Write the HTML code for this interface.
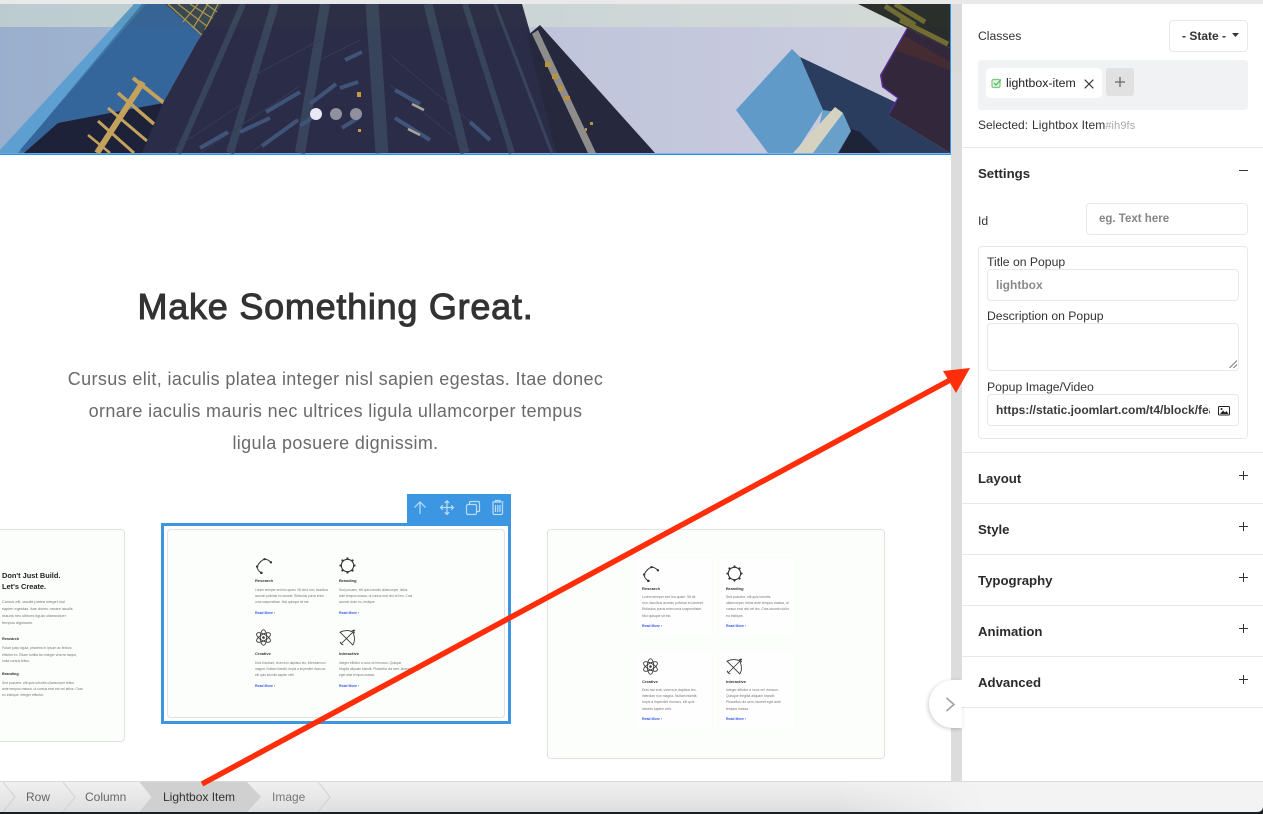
<!DOCTYPE html>
<html lang="en"><head><meta charset="utf-8"><title>Lightbox Item</title>
<style>
html,body{margin:0;padding:0;background:#fff}
body{width:1263px;height:814px;overflow:hidden;position:relative;font-family:"Liberation Sans",sans-serif;color:#222}
.a{position:absolute;box-sizing:border-box}
.t{position:absolute;white-space:nowrap;line-height:1}
.h{font-size:13.2px;font-weight:bold;color:#2b2b2b;left:978px}
.l{font-size:12.2px;color:#333}
.in{position:absolute;box-sizing:border-box;border:1px solid #e8e8e8;border-radius:4px;background:#fff}
.div{position:absolute;left:962px;width:301px;height:1px;background:#e8e8e8}
.card{position:absolute;box-sizing:border-box;background:#fcfefb;border:1px solid #e2e2e2;border-radius:4px}
.m{position:absolute;white-space:nowrap;line-height:1;font-size:3.4px;color:#777;filter:blur(.2px)}
.m.s{font-size:3.2px}
.mt{position:absolute;white-space:nowrap;line-height:1;font-size:4px;font-weight:bold;color:#333;filter:blur(.2px)}
.mr{position:absolute;white-space:nowrap;line-height:1;font-size:3.5px;font-weight:bold;color:#3358e8;filter:blur(.2px)}
.sub{position:absolute;background:#fdfefd;box-shadow:0 0 1px #f3f6f3}
.pl{position:absolute;left:1239px;width:9px;height:9px}
</style></head>
<body>
<!-- top strip -->
<div class="a" style="left:0;top:0;width:1263px;height:4px;background:#e9e9e9"></div>
<!-- hero -->
<svg class="a" style="left:0;top:4px" width="951" height="151" viewBox="0 4 951 151">
<defs><linearGradient id="sky" x1="0" x2="1" y1="0" y2="0"><stop offset="0" stop-color="#9aafcd"/><stop offset=".15" stop-color="#a0b4d0"/><stop offset=".6" stop-color="#c0c5db"/><stop offset="1" stop-color="#cdcedf"/></linearGradient></defs>
<rect x="0" y="4" width="951" height="150" fill="url(#sky)"/>
<rect x="0" y="4" width="951" height="23" fill="#eef8ea" opacity=".5"/>
<!-- light blue edge -->
<polygon points="134,4 146,4 24,153 0,153 0,150" fill="#5d9fd0"/>
<polygon points="142,4 146,4 26,153 18,153" fill="#3f77a6"/>
<!-- glass -->
<polygon points="146,4 222,4 197,42 163,103 58,125 26,153 20,150" fill="#34659b"/>
<polygon points="58,123 163,103 173,100 150,153 24,153" fill="#1d2238"/>
<!-- gold frame top -->
<polygon points="165,4 222,4 205,38" fill="#3a4148" opacity=".85"/>
<g stroke="#b89b50" stroke-width="1.2" fill="none"><path d="M168 4L203 36M178 4L212 30M190 4L218 22M206 4L220 14M198 4L183 22M208 4L193 28M218 4L205 30"/></g>
<!-- gold structure -->
<g stroke="#c4a25c" fill="none"><path d="M97 153L143 82" stroke-width="6"/><path d="M133 78L164 103" stroke-width="4"/><path d="M118 93L154 124" stroke-width="3.5"/><path d="M108 108L147 141" stroke-width="3"/><path d="M98 121L134 153" stroke-width="3"/><path d="M88 135L110 153" stroke-width="2.5"/></g>
<!-- main dark building -->
<polygon points="222,4 522,4 530,32 556,153 142,153 163,103 197,42" fill="#2b2c47"/>
<g stroke="#38445c" fill="none">
<path d="M243 4L178 153" stroke-width="6"/><path d="M275 4L230 153" stroke-width="8"/><path d="M325 4L300 153" stroke-width="10"/><path d="M372 4L382 153" stroke-width="13"/><path d="M428 4L465 153" stroke-width="9"/><path d="M465 4L512 153" stroke-width="6"/><path d="M495 4L552 153" stroke-width="3"/>
<path d="M168 153L240 105M255 75L320 40M200 153L300 86M250 153L310 112M320 60L360 40M390 55L480 130M390 85L470 150" stroke="#333c55" stroke-width="1"/>
</g>
<g stroke="#3f5478" fill="none" stroke-width="4"><path d="M270 118L240 132M300 92L266 112M200 148L228 132M336 84L310 104M262 146L298 120M320 112L300 126M395 90L420 104M395 118L430 140M345 60L362 52M340 88L358 82M342 128L358 118M470 122L490 140"/></g>
<path d="M412 104L424 110M408 129L420 135" stroke="#a8a594" stroke-width="2.5"/>
<rect x="357" y="92" width="4" height="5" fill="#c89a3d"/>
<rect x="358" y="129" width="3" height="3" fill="#c89a3d"/>
<!-- second building -->
<polygon points="527,36 540,25 655,153 556,153" fill="#26283d"/>
<polygon points="532,34 538,30 596,153 588,153" fill="#8e8d8c"/>
<g fill="#b8923c"><rect x="545" y="62" width="6" height="5"/><rect x="552" y="74" width="6" height="5"/><rect x="558" y="86" width="5" height="5"/><rect x="564" y="96" width="6" height="4"/><rect x="585" y="128" width="2" height="3"/><rect x="590" y="122" width="3" height="3"/></g>
<!-- cube -->
<polygon points="792,49 736,110 768,153 795,153 823,110 800,57" fill="#5f9ac9"/>
<polygon points="800,57 897,103 888,115 950,153 813,153 823,110" fill="#2b3d5f"/>
<polygon points="840,125 851,131 839,153 881,153 860,132" fill="#1e2438"/>
<polygon points="823,110 843,113 851,131 838,153 813,153" fill="#68a0ca"/>
<polygon points="835,107 843,113 813,153 793,153" fill="#d5d2c2"/>
<!-- top right -->
<polygon points="907,28 880,75 882,87 898,98 888,115 950,153 950,48" fill="#33273b"/>
<path d="M907 29L881 75L883 87L898 98L889 114" fill="none" stroke="#5a2a9e" stroke-width="1.3"/>
<polygon points="858,4 950,4 950,48 907,28" fill="#282c2c"/>
<path d="M885 6L915 25M900 20L948 44M895 4L925 22" stroke="#8d8236" stroke-width="5" opacity=".75"/>
<polygon points="905,36 950,62 950,70 895,50" fill="#452c33"/>
<!-- band dark overlay -->
<rect x="0" y="4" width="951" height="23" fill="#5a6a3c" opacity=".07"/>
<circle cx="316" cy="114" r="6" fill="#e9e9f5"/><circle cx="336" cy="114" r="6" fill="#91909f"/><circle cx="356" cy="114" r="6" fill="#91909f"/>
<rect x="950" y="4" width="1" height="150" fill="#2a93ea"/>
<rect x="0" y="153.6" width="951" height="1.4" fill="#2a93ea"/>
</svg>

<!-- gray gutter -->
<div class="a" style="left:951px;top:4px;width:11px;height:777px;background:#dcdcdc"></div>
<div class="a" style="left:951px;top:4px;width:11px;height:68px;background:#dadada"></div>
<!-- heading -->
<div class="t" style="left:0;width:671px;text-align:center;top:289px;font-size:36px;line-height:36px;color:#333;-webkit-text-stroke:1px #333;letter-spacing:.75px">Make Something Great.</div>
<div class="t" style="left:0;width:671px;text-align:center;top:370px;font-size:18px;line-height:18px;color:#6a6a6a;letter-spacing:.36px">Cursus elit, iaculis platea integer nisl sapien egestas. Itae donec</div>
<div class="t" style="left:0;width:671px;text-align:center;top:402px;font-size:18px;line-height:18px;color:#6a6a6a;letter-spacing:.36px">ornare iaculis mauris nec ultrices ligula ullamcorper tempus</div>
<div class="t" style="left:0;width:671px;text-align:center;top:434px;font-size:18px;line-height:18px;color:#6a6a6a;letter-spacing:.36px">ligula posuere dignissim.</div>

<svg width="0" height="0" style="position:absolute">
<symbol id="i1" viewBox="0 0 16 16"><path d="M2 9C4 5 6 3 9 2C11 2 13 3 15 5M2 9C2 11 3 13 6 15" fill="none" stroke="#333" stroke-width=".9"/><circle cx="9" cy="2" r="1.1" fill="#333"/><circle cx="15" cy="5" r="1.1" fill="#333"/><circle cx="2" cy="9" r="1.1" fill="#333"/><circle cx="6" cy="15" r="1.2" fill="#333"/></symbol>
<symbol id="i2" viewBox="0 0 16 16"><circle cx="8" cy="8" r="5.8" fill="none" stroke="#333" stroke-width="1"/><g fill="#333"><circle cx="8" cy="1.3" r="1"/><circle cx="8" cy="14.7" r="1"/><circle cx="1.3" cy="8" r="1"/><circle cx="14.7" cy="8" r="1"/><circle cx="3.2" cy="3.2" r="1"/><circle cx="12.8" cy="3.2" r="1"/><circle cx="3.2" cy="12.8" r="1"/><circle cx="12.8" cy="12.8" r="1"/></g></symbol>
<symbol id="i3" viewBox="0 0 16 16"><g fill="none" stroke="#333" stroke-width=".8"><ellipse cx="8" cy="8" rx="3" ry="7.3"/><ellipse cx="8" cy="8" rx="3" ry="7.3" transform="rotate(60 8 8)"/><ellipse cx="8" cy="8" rx="3" ry="7.3" transform="rotate(120 8 8)"/></g><circle cx="8" cy="8" r="1.2" fill="#333"/></symbol>
<symbol id="i4" viewBox="0 0 16 16"><g fill="none" stroke="#333" stroke-width=".8"><path d="M1 3C5 1 10 1 13 3C15 7 15 12 13 15Z"/><path d="M2 14L14 2M2 14L1 12M2 14L4 15M14 2L15 1M12 2L14 1V3L15 4"/></g></symbol>
</svg>

<!-- left card -->
<div class="card" style="left:-12px;top:529px;width:137px;height:213px"></div>
<div class="t" style="left:2px;top:572px;font-size:7.4px;font-weight:bold;color:#222">Don't Just Build.</div>
<div class="t" style="left:2px;top:583px;font-size:7.4px;font-weight:bold;color:#222">Let's Create.</div>
<div class="m" style="left:2px;top:600px;font-size:3.9px">Cursus elit, iaculis platea integer nisl</div>
<div class="m" style="left:2px;top:607px;font-size:3.9px">sapien egestas. Itae donec ornare iaculis</div>
<div class="m" style="left:2px;top:614px;font-size:3.9px">mauris nec ultrices ligula ullamcorper</div>
<div class="m" style="left:2px;top:621px;font-size:3.9px">tempus dignissim.</div>
<div class="mt" style="left:2px;top:638px;font-size:3.8px">Research</div>
<div class="m" style="left:2px;top:647px">Fusce justo ligula, pharetra in ipsum ac finibus</div>
<div class="m" style="left:2px;top:654px">efficitur ex. Etiam tortilla leo integer viverra neque,</div>
<div class="m" style="left:2px;top:660px">nulla cursus tellus.</div>
<div class="mt" style="left:2px;top:673px;font-size:3.8px">Branding</div>
<div class="m" style="left:2px;top:682px">Sed posuere, elit quis lobortis ullamcorper tellus</div>
<div class="m" style="left:2px;top:688px">ante tempus massa, ut cursus erat est vel tellus. Cras</div>
<div class="m" style="left:2px;top:694px">eu tristique. Integer efficitur.</div>

<!-- selected card -->
<div class="a" style="left:161px;top:523px;width:350px;height:201px;border:3px solid #3d96e2;background:#fff"></div>
<div class="card" style="left:167px;top:529px;width:338px;height:189px"></div>
<div class="a" style="left:407px;top:494px;width:104px;height:32px;background:#3d96e2"></div>
<svg class="a" style="left:407px;top:494px" width="104" height="32" viewBox="0 0 104 32"><g fill="none" stroke="#bcdcf6" stroke-width="1.2"><path d="M13 20V8M7.5 13.5L13 8L18.5 13.5"/><path d="M40 7V20M34 13.5H46M37.8 9L40 6.8L42.2 9M37.8 18.2L40 20.4L42.2 18.2M35.8 11.3L33.5 13.5L35.8 15.7M44.2 11.3L46.5 13.5L44.2 15.7"/><rect x="59.5" y="10.5" width="10" height="10" rx="1.5"/><path d="M62.5 10.5V8.5Q62.5 7.5 63.5 7.5H71Q72.5 7.5 72.5 9V16.5Q72.5 17.5 71.5 17.5H69.5"/><path d="M86 9V19Q86 20.5 87.5 20.5H94Q95.5 20.5 95.5 19V9M85 8H96.5M88.5 8V6.5H93V8M88.5 11V18M90.8 11V18M93 11V18"/></g></svg>
<svg class="a" style="left:255px;top:557px" width="17" height="17"><use href="#i1"/></svg>
<svg class="a" style="left:339px;top:557px" width="17" height="17"><use href="#i2"/></svg>
<svg class="a" style="left:255px;top:629px" width="17" height="17"><use href="#i3"/></svg>
<svg class="a" style="left:339px;top:629px" width="17" height="17"><use href="#i4"/></svg>
<div class="mt" style="left:255px;top:579px">Research</div><div class="mt" style="left:339px;top:579px">Branding</div>
<div class="m s" style="left:255px;top:588.5px">Lorem semper sed leo quam. Sit strut non, faucibus</div>
<div class="m s" style="left:255px;top:594.5px">acumin pulvinar eu laoreet. Ridiculus purus enim</div>
<div class="m s" style="left:255px;top:601px">urna suspendisse. Nisi quisque sit est.</div>
<div class="mr" style="left:255px;top:611.5px">Read More ›</div>
<div class="m s" style="left:339px;top:588.5px">Sed posuere, elit quis lobortis ullamcorper, tellus</div>
<div class="m s" style="left:339px;top:594.5px">ante tempus massa, ut cursus erat nisi vel leo. Cras</div>
<div class="m s" style="left:339px;top:601px">acumin dolor eu, tristique.</div>
<div class="mr" style="left:339px;top:611.5px">Read More ›</div>
<div class="mt" style="left:255px;top:652px">Creative</div><div class="mt" style="left:339px;top:652px">Interactive</div>
<div class="m s" style="left:255px;top:661.5px">Duis tincidunt, viverra in dapibus leo, interdumnon</div>
<div class="m s" style="left:255px;top:667.5px">magna. Nullam blandit, turpis a imperdiet rhoncus,</div>
<div class="m s" style="left:255px;top:674px">elit quis lobortis sapien velit.</div>
<div class="mr" style="left:255px;top:684.5px">Read More ›</div>
<div class="m s" style="left:339px;top:661.5px">Integer efficitur a nunc vel rhoncus. Quisque</div>
<div class="m s" style="left:339px;top:667.5px">fringilla aliquam blandit. Phasellus dui sem, laoreet</div>
<div class="m s" style="left:339px;top:674px">eget ante tempus massa.</div>
<div class="mr" style="left:339px;top:684.5px">Read More ›</div>

<!-- right card -->
<div class="card" style="left:547px;top:529px;width:338px;height:230px"></div>
<div class="sub" style="left:635px;top:558px;width:77px;height:78px"></div>
<div class="sub" style="left:719px;top:558px;width:77px;height:78px"></div>
<div class="sub" style="left:635px;top:651px;width:77px;height:78px"></div>
<div class="sub" style="left:719px;top:651px;width:77px;height:78px"></div>
<svg class="a" style="left:642px;top:565px" width="17" height="17"><use href="#i1"/></svg>
<svg class="a" style="left:726px;top:565px" width="17" height="17"><use href="#i2"/></svg>
<svg class="a" style="left:642px;top:658px" width="17" height="17"><use href="#i3"/></svg>
<svg class="a" style="left:726px;top:658px" width="17" height="17"><use href="#i4"/></svg>
<div class="mt" style="left:642px;top:587px">Research</div><div class="mt" style="left:726px;top:587px">Branding</div>
<div class="m" style="left:642px;top:596px">Lorem semper sed leo quam. Sit sit</div>
<div class="m" style="left:642px;top:602px">non, faucibus acumin pulvinar eu laoreet.</div>
<div class="m" style="left:642px;top:608px">Ridiculus purus enim urna suspendisse.</div>
<div class="m" style="left:642px;top:614.5px">Nisi quisque sit est.</div>
<div class="mr" style="left:642px;top:625px">Read More ›</div>
<div class="m" style="left:726px;top:596px">Sed posuere, elit quis lobortis</div>
<div class="m" style="left:726px;top:602px">ullamcorper, tellus ante tempus massa, ut</div>
<div class="m" style="left:726px;top:608px">cursus erat nisi vel leo. Cras acumin dolor</div>
<div class="m" style="left:726px;top:614.5px">eu tristique.</div>
<div class="mr" style="left:726px;top:625px">Read More ›</div>
<div class="mt" style="left:642px;top:680px">Creative</div><div class="mt" style="left:726px;top:680px">Interactive</div>
<div class="m" style="left:642px;top:689px">Duis nisl erat, viverra in dapibus leo,</div>
<div class="m" style="left:642px;top:695px">interdum non magna. Nullam blandit,</div>
<div class="m" style="left:642px;top:701px">turpis a imperdiet rhoncus, elit quis</div>
<div class="m" style="left:642px;top:707.5px">lobortis sapien velit.</div>
<div class="mr" style="left:642px;top:718px">Read More ›</div>
<div class="m" style="left:726px;top:689px">Integer efficitur a nunc vel rhoncus.</div>
<div class="m" style="left:726px;top:695px">Quisque fringilla aliquam blandit.</div>
<div class="m" style="left:726px;top:701px">Phasellus dui sem, laoreet eget ante</div>
<div class="m" style="left:726px;top:707.5px">tempus massa.</div>
<div class="mr" style="left:726px;top:718px">Read More ›</div>

<!-- panel -->
<div class="a" style="left:962px;top:4px;width:301px;height:777px;background:#fff"></div>
<div class="t l" style="left:978px;top:29.5px">Classes</div>
<div class="in" style="left:1169px;top:20px;width:79px;height:32px"></div>
<div class="t" style="left:1182px;top:29.5px;font-size:12px;font-weight:bold;color:#333">- State -</div>
<svg class="a" style="left:1232px;top:33px" width="8" height="5"><path d="M0 0H7L3.5 4Z" fill="#333"/></svg>
<div class="a" style="left:978px;top:60px;width:270px;height:50px;background:#f1f2f4;border-radius:3px"></div>
<div class="a" style="left:986px;top:68px;width:116px;height:30px;background:#fff;border-radius:4px"></div>
<svg class="a" style="left:991px;top:78px" width="11" height="11" viewBox="0 0 11 11"><rect x="1" y="1.5" width="8" height="8" rx="1.5" fill="#dff3df" stroke="#79c97e" stroke-width="1.2"/><path d="M3 5L5 7L10 1.5" fill="none" stroke="#5cbc63" stroke-width="1.3"/></svg>
<div class="t" style="left:1006px;top:76.5px;font-size:12.3px;color:#222">lightbox-item</div>
<svg class="a" style="left:1084px;top:79px" width="10" height="10"><path d="M.7.7L9.3 9.3M9.3.7L.7 9.3" stroke="#333" stroke-width="1.1"/></svg>
<div class="a" style="left:1106px;top:68px;width:28px;height:28px;background:#e1e1e1;border-radius:3px"></div>
<svg class="a" style="left:1115px;top:77px" width="10" height="10"><path d="M5 0V10M0 5H10" stroke="#666" stroke-width="1.3"/></svg>
<div class="t" style="left:978px;top:119px;font-size:12px;color:#333">Selected:</div>
<div class="t" style="left:1032px;top:119px;font-size:12px;color:#333;letter-spacing:.1px">Lightbox Item<span style="font-size:11px;color:#aaa">#ih9fs</span></div>
<div class="div" style="top:147px"></div>
<div class="t h" style="top:166.5px">Settings</div>
<div class="a" style="left:1239px;top:170px;width:9px;height:1px;background:#333"></div>
<div class="t l" style="left:978px;top:215px">Id</div>
<div class="in" style="left:1086px;top:203px;width:162px;height:32px"></div>
<div class="t" style="left:1099px;top:213.5px;font-size:11.5px;font-weight:bold;color:#858585">eg. Text here</div>
<div class="in" style="left:978px;top:246px;width:270px;height:193px"></div>
<div class="t l" style="left:987px;top:256px">Title on Popup</div>
<div class="in" style="left:987px;top:269px;width:252px;height:32px"></div>
<div class="t" style="left:996px;top:279px;font-size:12px;font-weight:bold;color:#8a8a8a">lightbox</div>
<div class="t l" style="left:987px;top:310px">Description on Popup</div>
<div class="in" style="left:987px;top:323px;width:252px;height:48px"></div>
<svg class="a" style="left:1229px;top:360px" width="9" height="9"><path d="M.5 8L8 .5M4.5 8L8 4.5" stroke="#555" stroke-width=".8"/></svg>
<div class="t l" style="left:987px;top:381px">Popup Image/Video</div>
<div class="in" style="left:987px;top:394px;width:252px;height:32px"></div>
<div class="t" style="left:996px;top:404px;width:214px;overflow:hidden;font-size:12px;font-weight:bold;color:#3a3a3a">https://static.joomlart.com/t4/block/features/</div>
<svg class="a" style="left:1218px;top:406px" width="12" height="10" viewBox="0 0 12 10"><rect x=".5" y=".5" width="11" height="8.5" rx="1" fill="#fff" stroke="#222"/><path d="M2 8L5 4.5L7 6.5L8.5 5L10.5 8Z" fill="#222"/><circle cx="3.5" cy="3" r="1" fill="#222"/></svg>
<div class="div" style="top:452px"></div>
<div class="t h" style="top:471.5px">Layout</div>
<svg class="pl" style="top:471px"><path d="M4.5 0V9M0 4.5H9" stroke="#333"/></svg>
<div class="div" style="top:503px"></div>
<div class="t h" style="top:522.5px">Style</div>
<svg class="pl" style="top:522px"><path d="M4.5 0V9M0 4.5H9" stroke="#333"/></svg>
<div class="div" style="top:554px"></div>
<div class="t h" style="top:573.5px">Typography</div>
<svg class="pl" style="top:573px"><path d="M4.5 0V9M0 4.5H9" stroke="#333"/></svg>
<div class="div" style="top:605px"></div>
<div class="t h" style="top:624.5px">Animation</div>
<svg class="pl" style="top:624px"><path d="M4.5 0V9M0 4.5H9" stroke="#333"/></svg>
<div class="div" style="top:656px"></div>
<div class="t h" style="top:675.5px">Advanced</div>
<svg class="pl" style="top:675px"><path d="M4.5 0V9M0 4.5H9" stroke="#333"/></svg>
<div class="div" style="top:707px"></div>

<!-- toggle -->
<div class="a" style="left:929px;top:680px;width:33px;height:48px;background:#fff;border-radius:24px 0 0 24px;box-shadow:-1px 1px 4px rgba(0,0,0,.2)"></div>
<div class="a" style="left:962px;top:676px;width:6px;height:30px;background:#fff"></div>
<svg class="a" style="left:945px;top:697px" width="11" height="15"><path d="M1.5 1L9 7.5L1.5 14" fill="none" stroke="#a0a0a0" stroke-width="1.6"/></svg>

<!-- bottom bar -->
<div class="a" style="left:0;top:781px;width:1263px;height:31px;background:linear-gradient(#f0f0f0,#dfdfdf);border-top:1px solid #d9d9d9"></div>
<div class="a" style="left:840px;top:782px;width:423px;height:30px;background:linear-gradient(90deg,rgba(243,243,243,0) 0,#f3f3f3 145px)"></div>
<svg class="a" style="left:0;top:782px" width="340" height="30" viewBox="0 0 340 30">
<polygon points="140,0 247,0 261,15 247,30 140,30 152,15" fill="#d0d0d0"/>
<g fill="none" stroke="#d0d0d0" stroke-width="1"><path d="M3 0L15 15L3 30M63 0L75 15L63 30M140 0L152 15L140 30M318 0L330 15L318 30"/></g>
</svg>
<div class="t" style="left:26px;top:791px;font-size:12px;color:#666">Row</div>
<div class="t" style="left:85px;top:791px;font-size:12px;color:#666">Column</div>
<div class="t" style="left:163px;top:791px;font-size:12px;color:#333">Lightbox Item</div>
<div class="t" style="left:272px;top:791px;font-size:12px;color:#777">Image</div>
<div class="a" style="left:0;top:812px;width:1263px;height:2px;background:#1a1f24"></div>
<svg class="a" style="left:1253px;top:802px" width="10" height="12"><path d="M10 0V12H0V10H4Q10 10 10 4Z" fill="#1a1f24"/></svg>

<!-- red arrow -->
<svg class="a" style="left:0;top:0;pointer-events:none" width="1263" height="814"><path d="M202 784L952 379" stroke="#ff2d0a" stroke-width="5.5" fill="none"/><polygon points="970,368 943,371 956,393" fill="#ff2d0a"/></svg>
</body></html>
